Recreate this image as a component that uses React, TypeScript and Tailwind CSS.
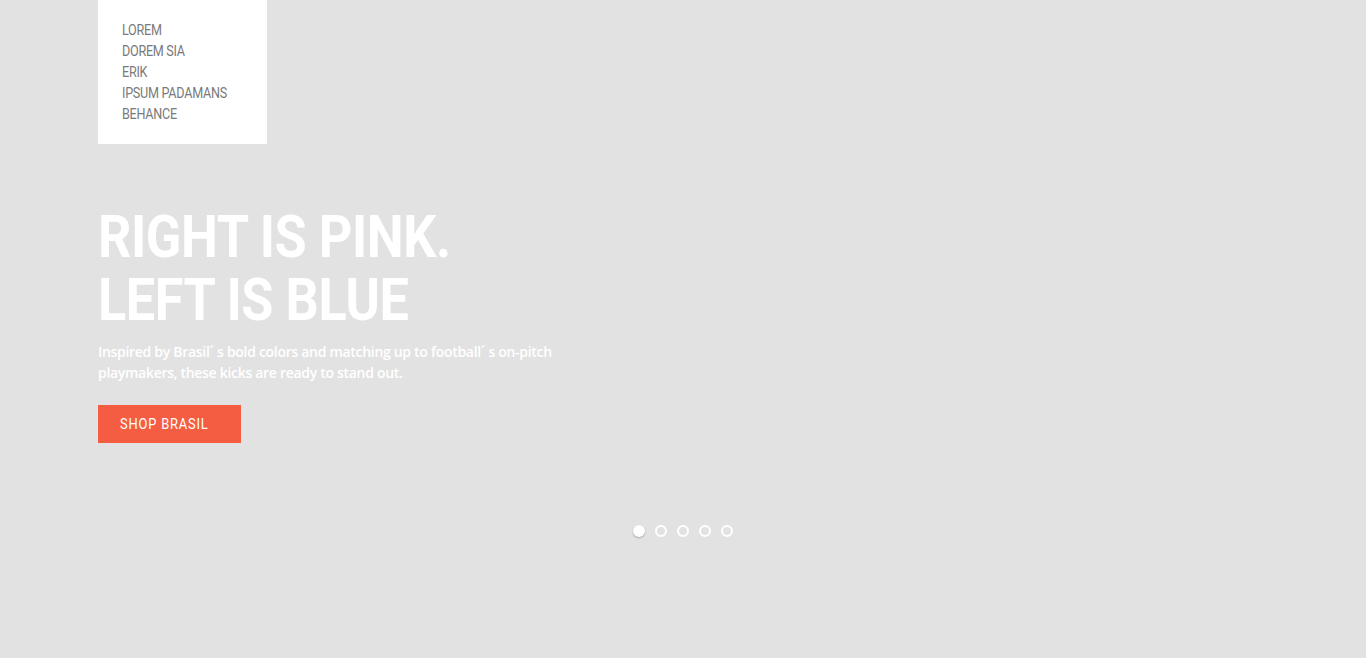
const menuItems = ['LOREM', 'DOREM SIA', 'ERIK', 'IPSUM PADAMANS', 'BEHANCE'];

const Dots = ({ count, active }: { count: number; active: number }) => (
  <div className="flex justify-center gap-[10px]">
    {Array.from({ length: count }).map((_, i) => (
      <span
        key={i}
        className={`block w-3 h-3 rounded-full border-2 border-white ${i === active ? 'bg-white shadow-[0_1px_2px_rgba(0,0,0,0.25)]' : ''}`}
      />
    ))}
  </div>
);

export default function App() {
  return (
    <div className="w-[1366px] h-[658px] bg-[#e2e2e2] overflow-hidden font-['Roboto',sans-serif]">
      <div className="pl-[98px]">
        <nav className="w-[169px] h-[144px] bg-white pt-[20px] pl-[24px]">
          <ul className="flex flex-col">
            {menuItems.map((item) => (
              <li
                key={item}
                className="text-[14px] leading-[21px] text-[#7a7a7a] tracking-[-0.3px] origin-left scale-x-[0.9] whitespace-nowrap"
              >
                {item}
              </li>
            ))}
          </ul>
        </nav>

        <section className="mt-[61px]">
          <h1 className="flex flex-col text-white font-bold text-[60px] leading-[63px] tracking-[-0.5px] origin-left scale-x-[0.87] whitespace-nowrap">
            <span className="block">RIGHT IS PINK.</span>
            <span className="block">LEFT IS BLUE</span>
          </h1>
          <p className="mt-[10px] w-[490px] text-white font-['Open_Sans',sans-serif] font-semibold text-[14px] leading-[21px] tracking-[-0.3px]">
            Inspired by Brasil´ s bold colors and matching up to football´ s on-pitch playmakers, these kicks are ready to stand out.
          </p>
          <button className="mt-[22px] w-[143px] h-[38px] bg-[#f55d42] text-white text-left pl-[22px] text-[14px] font-normal">
            <span className="inline-block origin-left scale-x-[0.92] tracking-[0.9px] whitespace-nowrap">SHOP BRASIL</span>
          </button>
        </section>
      </div>

      <div className="mt-[82px]">
        <Dots count={5} active={0} />
      </div>
    </div>
  );
}
